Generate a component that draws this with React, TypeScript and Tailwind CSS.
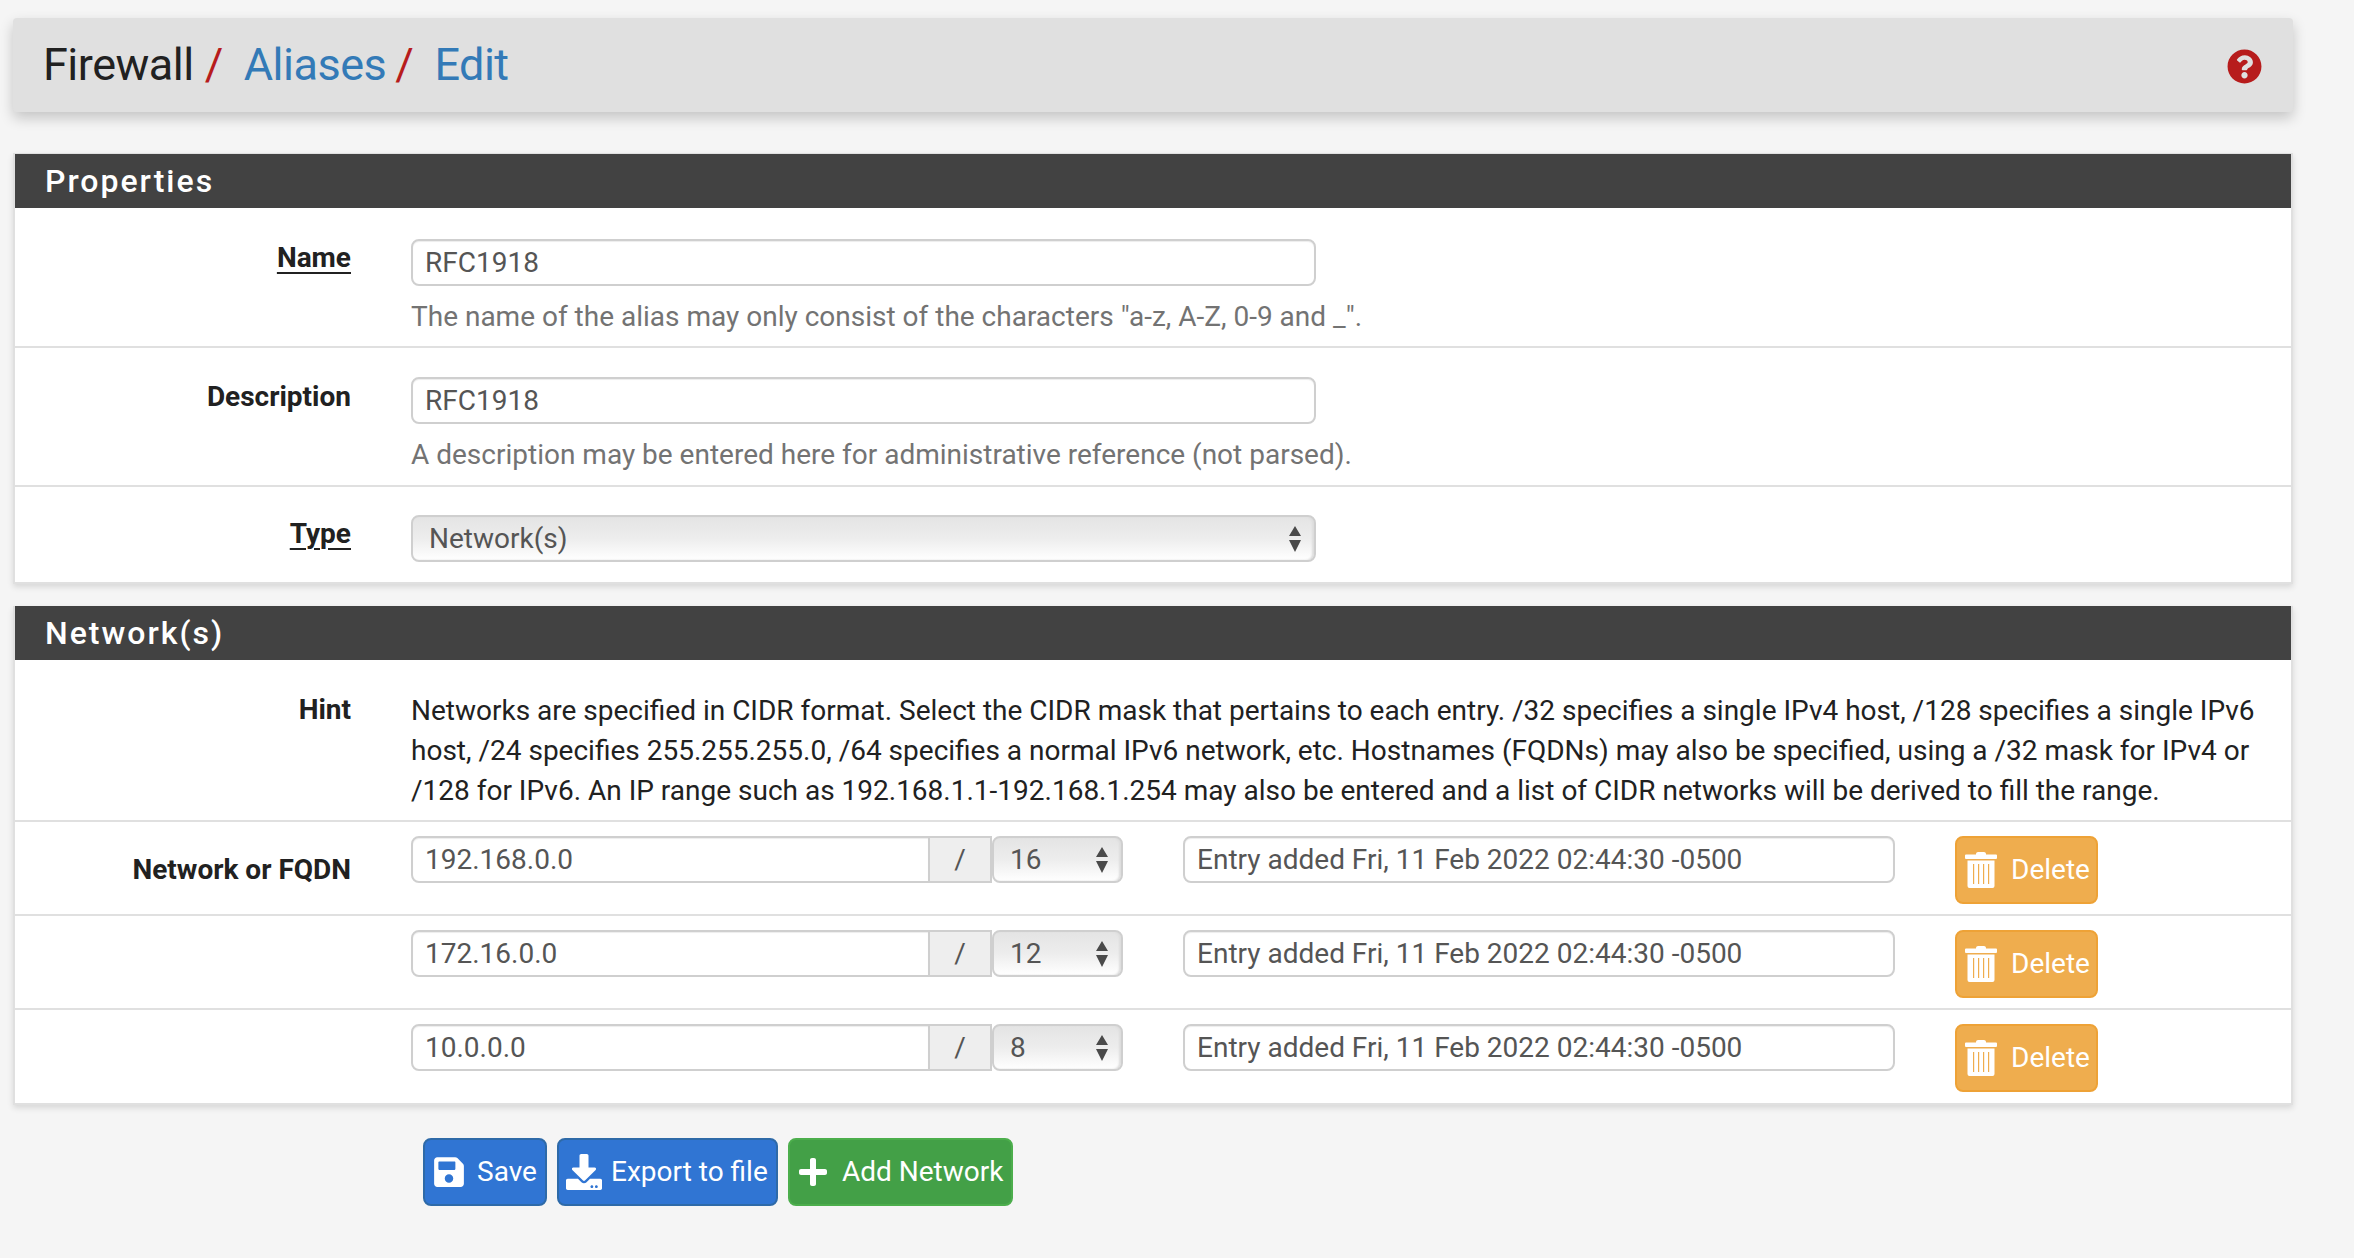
import { FaDownload, FaPlus, FaQuestionCircle, FaSave } from 'react-icons/fa'

const STAMP = 'Entry added Fri, 11 Feb 2022 02:44:30 -0500'

const networks = [
  { address: '192.168.0.0', mask: '16' },
  { address: '172.16.0.0', mask: '12' },
  { address: '10.0.0.0', mask: '8' },
]

function TrashIcon() {
  return (
    <svg viewBox="0 0 32 36" className="w-[32px] h-[36px] shrink-0" fill="currentColor">
      <path d="M11 2C11 .8 12 0 13 0h6c1 0 2 .8 2 2v.4h10a1 1 0 0 1 1 1V6a1 1 0 0 1-1 1H1a1 1 0 0 1-1-1V3.400a1 1 0 0 1 1-1h10z" />
      <path
        fillRule="evenodd"
        d="M2.500 8.500h27V34a2 2 0 0 1-2 2h-23a2 2 0 0 1-2-2zM8 12v20h1.200V12zM13 12v20h1.200V12zM18 12v20h1.200V12zM23 12v20h1.200V12z"
      />
    </svg>
  )
}

function Arrows() {
  return (
    <svg viewBox="0 0 12 26" className="w-[12px] h-[26px] absolute right-[15px] top-1/2 -translate-y-1/2 pointer-events-none" fill="#4a4a4a">
      <path d="M6 0l6 10H0zM0 14h12L6 26z" />
    </svg>
  )
}

function Select({ value, width }: { value: string; width: string }) {
  return (
    <div className={`relative h-[47px] ${width}`}>
      <select
        defaultValue={value}
        className="appearance-none w-full h-full rounded-[8px] border-2 border-[#cfcfcf] pl-[16px] text-[28px] leading-[40px] text-[#555] outline-none bg-gradient-to-b from-[#e4e4e4] via-[#ededed] to-[#ffffff] shadow-[inset_-2px_0_2px_#ddd]"
      >
        <option>{value}</option>
      </select>
      <Arrows />
    </div>
  )
}

function TextInput({ value, className }: { value: string; className: string }) {
  return (
    <input
      readOnly
      value={value}
      className={`h-[47px] border-2 border-[#cfcfcf] bg-white px-[12px] text-[28px] text-[#555] outline-none shadow-[inset_0_1px_1px_rgba(0,0,0,0.075)] ${className}`}
    />
  )
}

function Label({ text, underline, className }: { text: string; underline?: boolean; className?: string }) {
  return (
    <span className={`block w-[336px] mr-[60px] shrink-0 text-right text-[28px] leading-[38px] font-bold text-[#212121] ${underline ? 'underline underline-offset-[5px] decoration-2' : ''} ${className ?? ''}`}>
      {text}
    </span>
  )
}

function PanelHeading({ title }: { title: string }) {
  return (
    <div className="h-[54px] bg-[#424242] pl-[30px] flex items-center text-white text-[32px] font-medium tracking-[2px]">
      {title}
    </div>
  )
}

export default function App() {
  return (
    <div className="min-h-[1258px] bg-[#f5f5f5] pt-[18px] pl-[13px] w-[2354px] overflow-hidden font-['Roboto',sans-serif]">
      {/* Breadcrumb */}
      <div className="w-[2280px] h-[94px] bg-[#e0e0e0] rounded-[4px] shadow-[0_6px_14px_rgba(0,0,0,0.2)] flex items-center justify-between pl-[30px] pr-[31px] text-[45px] tracking-[-0.5px]">
        <h1 className="font-normal">
          <span className="text-[#212121]">Firewall</span>
          <span className="text-[#b71c1c] ml-[11px] mr-[21px]">/</span>
          <span className="text-[#337ab7]">Aliases</span>
          <span className="text-[#b71c1c] ml-[9px] mr-[21px]">/</span>
          <span className="text-[#337ab7]">Edit</span>
        </h1>
        <FaQuestionCircle className="text-[#b71c1c] w-[35px] h-[35px] mt-[2px]" />
      </div>

      {/* Properties */}
      <section className="mt-[41px] w-[2280px] border-x-2 border-t border-b-2 border-[#e0e0e0] bg-white shadow-[0_3px_6px_rgba(0,0,0,0.12)]">
        <PanelHeading title="Properties" />
        <div className="h-[140px] border-b-2 border-[#e0e0e0] pt-[31px] flex items-start">
          <Label text="Name" underline />
          <div>
            <TextInput value="RFC1918" className="w-[905px] rounded-[8px] block" />
            <p className="mt-[12px] text-[28px] leading-[38px] text-[#737373]">
              The name of the alias may only consist of the characters "a-z, A-Z, 0-9 and _".
            </p>
          </div>
        </div>
        <div className="h-[139px] border-b-2 border-[#e0e0e0] pt-[29px] flex items-start">
          <Label text="Description" className="mt-[1px]" />
          <div>
            <TextInput value="RFC1918" className="w-[905px] rounded-[8px] block" />
            <p className="mt-[12px] text-[28px] leading-[38px] text-[#737373]">
              A description may be entered here for administrative reference (not parsed).
            </p>
          </div>
        </div>
        <div className="h-[95px] pt-[28px] flex items-start">
          <Label text="Type" underline />
          <Select value="Network(s)" width="w-[905px]" />
        </div>
      </section>

      {/* Networks */}
      <section className="mt-[22px] w-[2280px] border-x-2 border-b-2 border-[#e0e0e0] bg-white shadow-[0_3px_6px_rgba(0,0,0,0.12)]">
        <PanelHeading title="Network(s)" />
        <div className="h-[162px] border-b-2 border-[#e0e0e0] pt-[31px] flex items-start">
          <Label text="Hint" />
          <p className="w-[1850px] text-[28px] leading-[40px] text-[#212121]">
            Networks are specified in CIDR format. Select the CIDR mask that pertains to each entry. /32 specifies a single IPv4 host, /128 specifies a single IPv6 host, /24 specifies 255.255.255.0, /64 specifies a normal IPv6 network, etc. Hostnames (FQDNs) may also be specified, using a /32 mask for IPv4 or /128 for IPv6. An IP range such as 192.168.1.1-192.168.1.254 may also be entered and a list of CIDR networks will be derived to fill the range.
          </p>
        </div>
        {networks.map((net, i) => (
          <div
            key={net.address}
            className={`pt-[14px] flex items-start ${i < networks.length - 1 ? 'h-[94px] border-b-2 border-[#e0e0e0]' : 'h-[93px]'}`}
          >
            {i === 0 ? <Label text="Network or FQDN" className="mt-[15px]" /> : <span className="block w-[336px] mr-[60px] shrink-0" />}
            <TextInput value={net.address} className="w-[519px] rounded-l-[8px]" />
            <span className="w-[62px] h-[47px] border-y-2 border-r-2 border-[#cfcfcf] bg-[#eeeeee] flex items-center justify-center text-[28px] text-[#555]">
              /
            </span>
            <Select value={net.mask} width="w-[131px]" />
            <TextInput value={STAMP} className="ml-[60px] w-[712px] rounded-[8px]" />
            <button className="ml-[60px] w-[143px] h-[68px] rounded-[8px] border-2 border-[#eea236] bg-[#efad4e] text-white text-[28px] flex items-center pl-[8px] gap-[14px]">
              <TrashIcon />
              Delete
            </button>
          </div>
        ))}
      </section>

      {/* Actions */}
      <div className="mt-[33px] ml-[410px] flex gap-[10px]">
        <button className="w-[124px] h-[68px] rounded-[8px] border-2 border-[#2e6aa8] bg-[#3075d3] text-white text-[28px] flex items-center pl-[8px] gap-[12px]">
          <FaSave className="w-[32px] h-[34px]" />
          Save
        </button>
        <button className="w-[221px] h-[68px] rounded-[8px] border-2 border-[#2e6aa8] bg-[#3075d3] text-white text-[28px] flex items-center pl-[7px] gap-[9px]">
          <FaDownload className="w-[36px] h-[36px]" />
          Export to file
        </button>
        <button className="w-[225px] h-[68px] rounded-[8px] border-2 border-[#4cae4c] bg-[#43a047] text-white text-[28px] flex items-center pl-[7px] gap-[13px]">
          <FaPlus className="w-[32px] h-[32px]" />
          Add Network
        </button>
      </div>
    </div>
  )
}
